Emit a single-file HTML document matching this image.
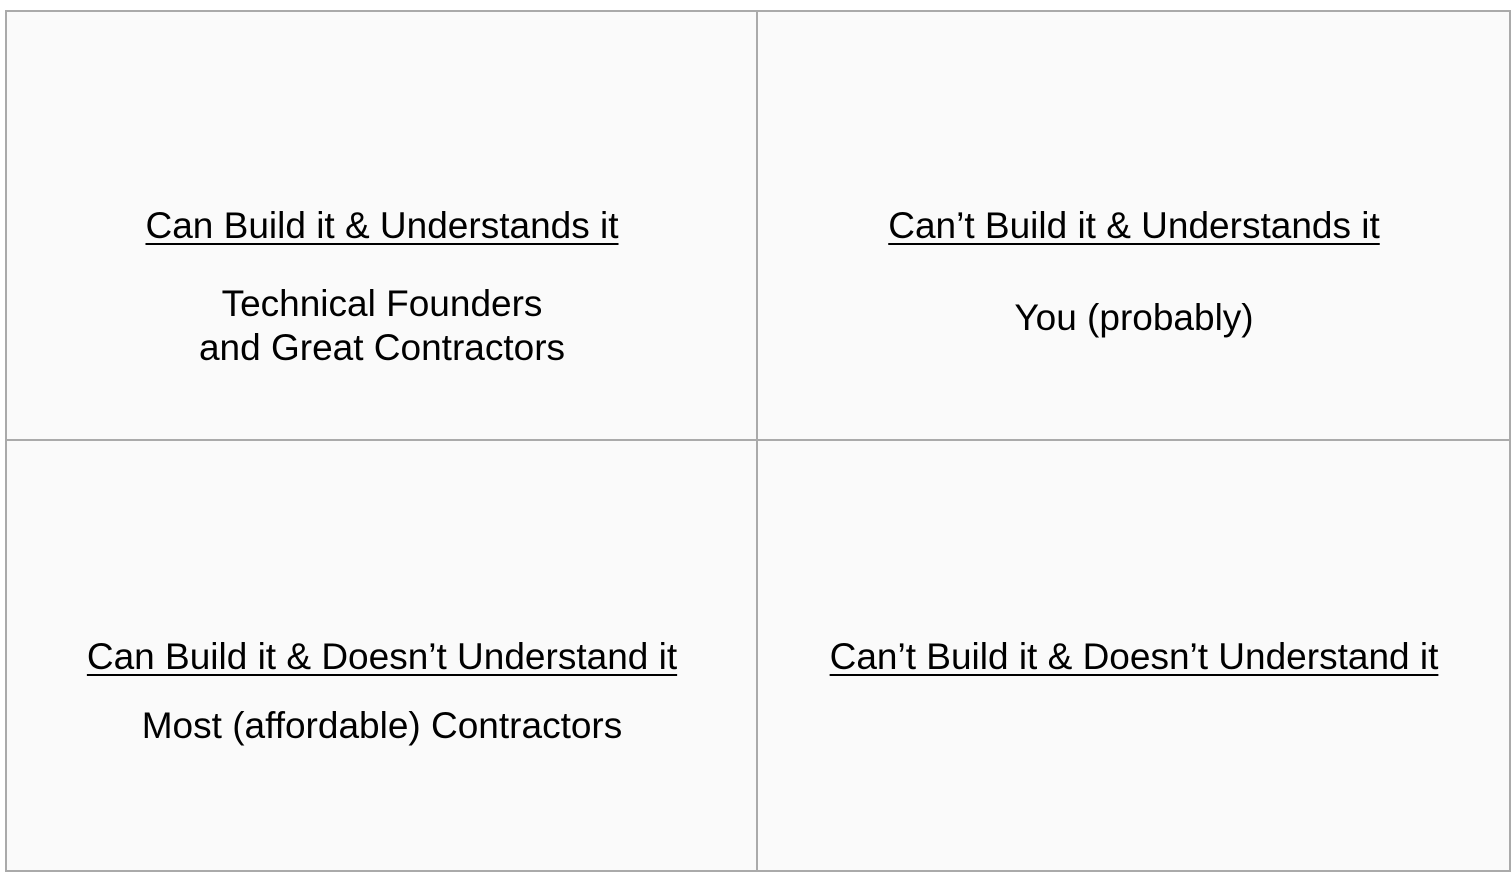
<!DOCTYPE html>
<html><head><style>
html,body{margin:0;padding:0;background:#fff;}
body{width:1512px;height:880px;position:relative;overflow:hidden;font-family:"Liberation Sans",Arial,sans-serif;color:#000;}
.grid{position:absolute;left:5px;top:10px;width:1502px;height:858px;border:2px solid #aaa;background:#fafafa;}
.v{position:absolute;left:756px;top:10px;width:2px;height:862px;background:#aaa;}
.h{position:absolute;left:5px;top:439px;width:1506px;height:2px;background:#aaa;}
.t{position:absolute;width:752px;text-align:center;font-size:37px;line-height:44px;white-space:nowrap;}
.u{text-decoration:underline;text-decoration-thickness:2px;text-underline-offset:5px;}
</style></head><body>
<div class="grid"></div><div class="v"></div><div class="h"></div>
<div class="t u" style="left:6px;top:204px">Can Build it &amp; Understands it</div>
<div class="t" style="left:6px;top:282px">Technical Founders<br>and Great Contractors</div>
<div class="t u" style="left:758px;top:204px">Can’t Build it &amp; Understands it</div>
<div class="t" style="left:758px;top:296px">You (probably)</div>
<div class="t u" style="left:6px;top:635px">Can Build it &amp; Doesn’t Understand it</div>
<div class="t" style="left:6px;top:704px">Most (affordable) Contractors</div>
<div class="t u" style="left:758px;top:635px">Can’t Build it &amp; Doesn’t Understand it</div>
</body></html>
